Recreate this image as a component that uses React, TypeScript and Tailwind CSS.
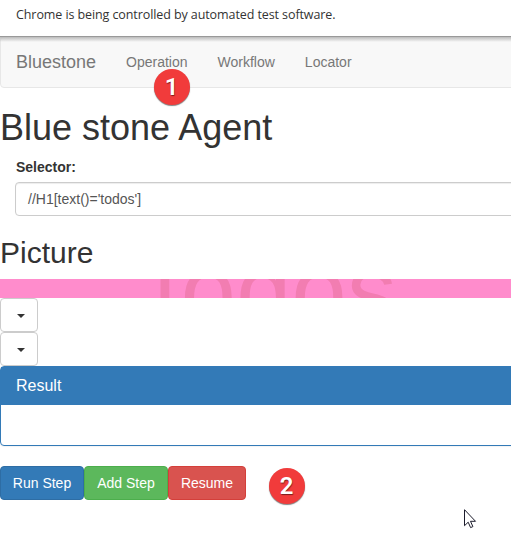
import React from "react";

function Caret() {
  return (
    <span className="h-0 w-0 border-x-4 border-t-4 border-x-transparent border-t-[#333]" />
  );
}

function DropdownButton() {
  return (
    <button className="flex h-[34px] w-[38px] items-center justify-center rounded border border-[#ccc] bg-white pl-[4px] pt-px">
      <Caret />
    </button>
  );
}

function Badge({ label, className }: { label: string; className: string }) {
  return (
    <span
      className={
        "absolute flex h-9 w-9 items-center justify-center rounded-full bg-[#f13b3b] font-['Roboto',sans-serif] text-[24px] font-semibold leading-none text-white shadow-[0_1px_1px_rgba(0,0,0,0.5)] [text-shadow:0.5px_1px_1px_rgba(0,0,0,0.5)] " +
        className
      }
    >
      {label}
    </span>
  );
}

export default function App() {
  return (
    <div className="relative h-[548px] w-[511px] overflow-hidden bg-white font-['Liberation_Sans',Arial,sans-serif] text-[14px] leading-5 text-[#333]">
      <div className="h-9 pl-4 pt-[5px] font-['Open_Sans','Noto_Sans',sans-serif] text-[12.5px] text-[#333]">
        <span className="whitespace-nowrap tracking-[-0.09px]">Chrome is being controlled by automated test software.</span>
      </div>

      <nav className="relative -mr-2 flex h-[52px] items-center rounded border border-[#e7e7e7] bg-[#f8f8f8] pl-[15px] text-[#777]">
        <div className="absolute -left-px -top-px h-[6px] w-[520px] border-t border-[#999] bg-linear-to-b from-[#bbb] to-transparent" />
        <span className="text-[18px]">Bluestone</span>
        <span className="ml-[30px]">Operation</span>
        <span className="ml-[30px]">Workflow</span>
        <span className="ml-[30px]">Locator</span>
      </nav>

      <h1 className="mt-5 h-[39px] text-[36px] font-normal leading-[39.6px]">Blue stone Agent</h1>

      <div className="mt-[10px] pl-[15px]">
        <label className="block pl-px font-bold">Selector:</label>
        <div className="-mr-2 mt-[5px] flex h-[34px] items-center rounded border border-[#ccc] px-3 text-[#555] shadow-[inset_0_1px_1px_rgba(0,0,0,0.075)]">
          //H1[text()='todos']
        </div>
      </div>

      <h2 className="mt-5 h-[33px] text-[30px] font-normal leading-[33px]">Picture</h2>

      <div className="mt-[10px] h-[19px] overflow-hidden bg-[#ff8ccc]">
        <div className="-mt-[39px] pl-[153px] text-[99px] leading-[100px] tracking-[0.3px] text-[#f27db1]">todos</div>
      </div>

      <DropdownButton />
      <DropdownButton />

      <section className="-mr-2 h-20 rounded border border-[#337ab7] shadow-[0_1px_1px_rgba(0,0,0,0.05)]">
        <h3 className="bg-[#337ab7] py-[10px] pl-[15px] text-[16px] leading-[18px] text-white">Result</h3>
      </section>

      <div className="mt-5 flex text-white">
        <button className="h-[34px] w-[84px] rounded border border-[#2e6da4] bg-[#337ab7]">Run Step</button>
        <button className="h-[34px] w-[84px] rounded border border-[#4cae4c] bg-[#5cb85c]">Add Step</button>
        <button className="h-[34px] w-[78px] rounded border border-[#d43f3a] bg-[#d9534f]">Resume</button>
      </div>

      <Badge label="1" className="left-[153.5px] top-[69px]" />
      <Badge label="2" className="left-[268.5px] top-[468px]" />

      <svg className="absolute left-[464px] top-[509px]" width="13" height="20" viewBox="0 0 13 20">
        <path d="M.5.7v16l3.7-3.5 2.4 5.4 2.3-1-2.4-5.3h5z" fill="#fff" stroke="#1b1b2b" strokeWidth="1" />
      </svg>
    </div>
  );
}
